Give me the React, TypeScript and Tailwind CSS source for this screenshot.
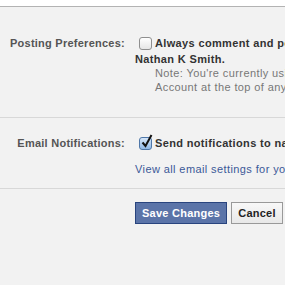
import React from 'react';

function Checkbox({ checked }: { checked?: boolean }) {
    return <span className={`relative ml-[4px] mr-[3px] inline-block h-[13px] w-[13px] shrink-0 rounded-[3px] border ${checked ? 'border-[#4f77a8] bg-gradient-to-b from-[#d6e6f8] to-[#8fb8e6]' : 'border-[#8f8f8f] bg-gradient-to-b from-white to-[#e6e6e6]'}`}>
        {checked && (
            <svg className="absolute -top-[4px] left-[1px]" width="12" height="14" viewBox="0 0 12 14">
                <path d="M1.5 8.5 L4.5 12 L10.5 1" fill="none" stroke="#111" strokeWidth="2" />
            </svg>
        )}
    </span>;
}

export default function App(): JSX.Element {
    return <div className="h-[285px] w-[285px] overflow-hidden bg-[#f2f2f2] text-[11px] leading-[14px] tracking-[0.4px] whitespace-nowrap" style={{ fontFamily: '"Liberation Sans", Arial, sans-serif' }}>
        <div className="h-[7px] border-b border-[#b3b3b3] bg-white" />

        <div className="pt-[28px] pb-[23px] border-b border-[#d8d8d8]">
            <div className="flex">
                <div className="w-[125px] shrink-0 h-[16px] flex items-center justify-end font-bold tracking-[0.25px] text-[#555]">Posting Preferences:</div>
                <div className="ml-[10px] flex flex-col">
                    <div className="h-[16px] flex items-center font-bold tracking-[0.35px] text-[#333]">
                        <Checkbox />
                        <span>Always comment and post on your wall as</span>
                    </div>
                    <div className="mt-[1px] font-bold tracking-[0.35px] text-[#333]">Nathan K Smith.</div>
                    <div className="pl-[20px] text-[#777]">
                        <div>Note: You're currently using Facebook as</div>
                        <div>Account at the top of any page.</div>
                    </div>
                </div>
            </div>
        </div>

        <div className="pt-[17px] pb-[12px] border-b border-[#d8d8d8]">
            <div className="flex">
                <div className="w-[125px] shrink-0 h-[16px] flex items-center justify-end font-bold tracking-[0.25px] text-[#555]">Email Notifications:</div>
                <div className="ml-[10px] flex flex-col">
                    <div className="h-[16px] flex items-center font-bold tracking-[0.35px] text-[#333]">
                        <Checkbox checked />
                        <span>Send notifications to nathan</span>
                    </div>
                    <a className="mt-[11px] text-[#3b5998]">View all email settings for your account</a>
                </div>
            </div>
        </div>

        <div className="mt-[13px] ml-[135px] flex gap-[4px]">
            <button className="h-[22px] px-[6px] border border-[#29447e] bg-[#5b74a8] font-bold tracking-[0.25px] text-white">Save Changes</button>
            <button className="h-[22px] px-[6px] border border-[#999] bg-gradient-to-b from-[#f8f8f8] to-[#e8e8e8] font-bold tracking-[0.25px] text-[#222]">Cancel</button>
        </div>
    </div>;
}
